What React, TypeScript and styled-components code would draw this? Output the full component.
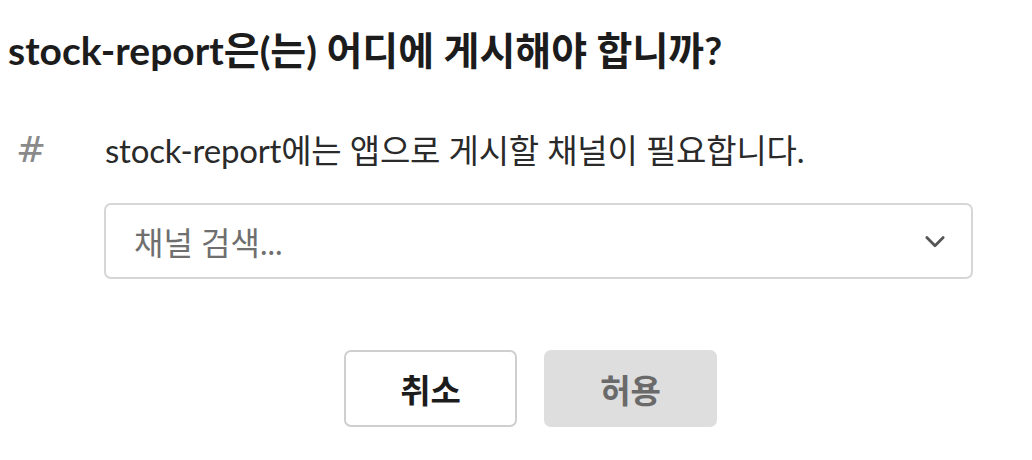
import React from "react";
import styled, { createGlobalStyle } from "styled-components";

const GlobalStyle = createGlobalStyle`
  html, body {
    margin: 0;
    padding: 0;
    background: #ffffff;
  }
  body {
    font-family: "Lato", "Noto Sans CJK KR", sans-serif;
    color: #1d1c1d;
  }
`;

const Dialog = styled.div`
  width: 1032px;
  height: 460px;
  box-sizing: border-box;
  padding: 23px 0 0 8px;
  display: flex;
  flex-direction: column;
`;

const Title = styled.h1`
  margin: 0;
  font-size: 39px;
  font-weight: 700;
  line-height: 54px;
  color: #1d1c1d;
  white-space: nowrap;
`;

const InfoRow = styled.div`
  display: flex;
  align-items: center;
  margin-top: 47px;
  height: 50px;
`;

const HashIcon = styled.span`
  width: 97px;
  padding-left: 8px;
  box-sizing: border-box;
  font-size: 36px;
  color: #8a8a8a;
  font-family: "DejaVu Serif", serif;
  font-style: italic;
`;

const InfoText = styled.span`
  font-size: 33px;
  color: #2a2a2a;
  white-space: nowrap;
  letter-spacing: -0.2px;
`;

const SelectBox = styled.div`
  margin: 29px 0 0 96px;
  width: 869px;
  height: 76px;
  box-sizing: border-box;
  border: 2px solid #d6d6d6;
  border-radius: 7px;
  display: flex;
  align-items: center;
  justify-content: space-between;
  padding: 0 22px 0 28px;
`;

const Placeholder = styled.span`
  font-size: 32px;
  color: #6f6f6f;
`;

const Chevron = styled.svg`
  width: 28px;
  height: 28px;
`;

const ButtonRow = styled.div`
  display: flex;
  gap: 27px;
  margin: 71px 0 0 336px;
`;

const Button = styled.button<{ $primary?: boolean }>`
  width: 173px;
  height: 77px;
  box-sizing: border-box;
  border-radius: 7px;
  border: 2px solid ${({ $primary }) => ($primary ? "#dedede" : "#cfcfcf")};
  background: ${({ $primary }) => ($primary ? "#dedede" : "#ffffff")};
  color: ${({ $primary }) => ($primary ? "#6a6a6a" : "#1d1c1d")};
  font-family: "Lato", "Noto Sans CJK KR", sans-serif;
  font-size: 33px;
  font-weight: 700;
  cursor: pointer;
`;

export default function App() {
  return (
    <>
      <GlobalStyle />
      <Dialog>
        <Title>stock-report은(는) 어디에 게시해야 합니까?</Title>
        <InfoRow>
          <HashIcon>#</HashIcon>
          <InfoText>stock-report에는 앱으로 게시할 채널이 필요합니다.</InfoText>
        </InfoRow>
        <SelectBox>
          <Placeholder>채널 검색...</Placeholder>
          <Chevron viewBox="0 0 24 24" fill="none" stroke="#555" strokeWidth="2.4" strokeLinecap="round" strokeLinejoin="round">
            <path d="M5 9l7 7 7-7" />
          </Chevron>
        </SelectBox>
        <ButtonRow>
          <Button>취소</Button>
          <Button $primary>허용</Button>
        </ButtonRow>
      </Dialog>
    </>
  );
}
